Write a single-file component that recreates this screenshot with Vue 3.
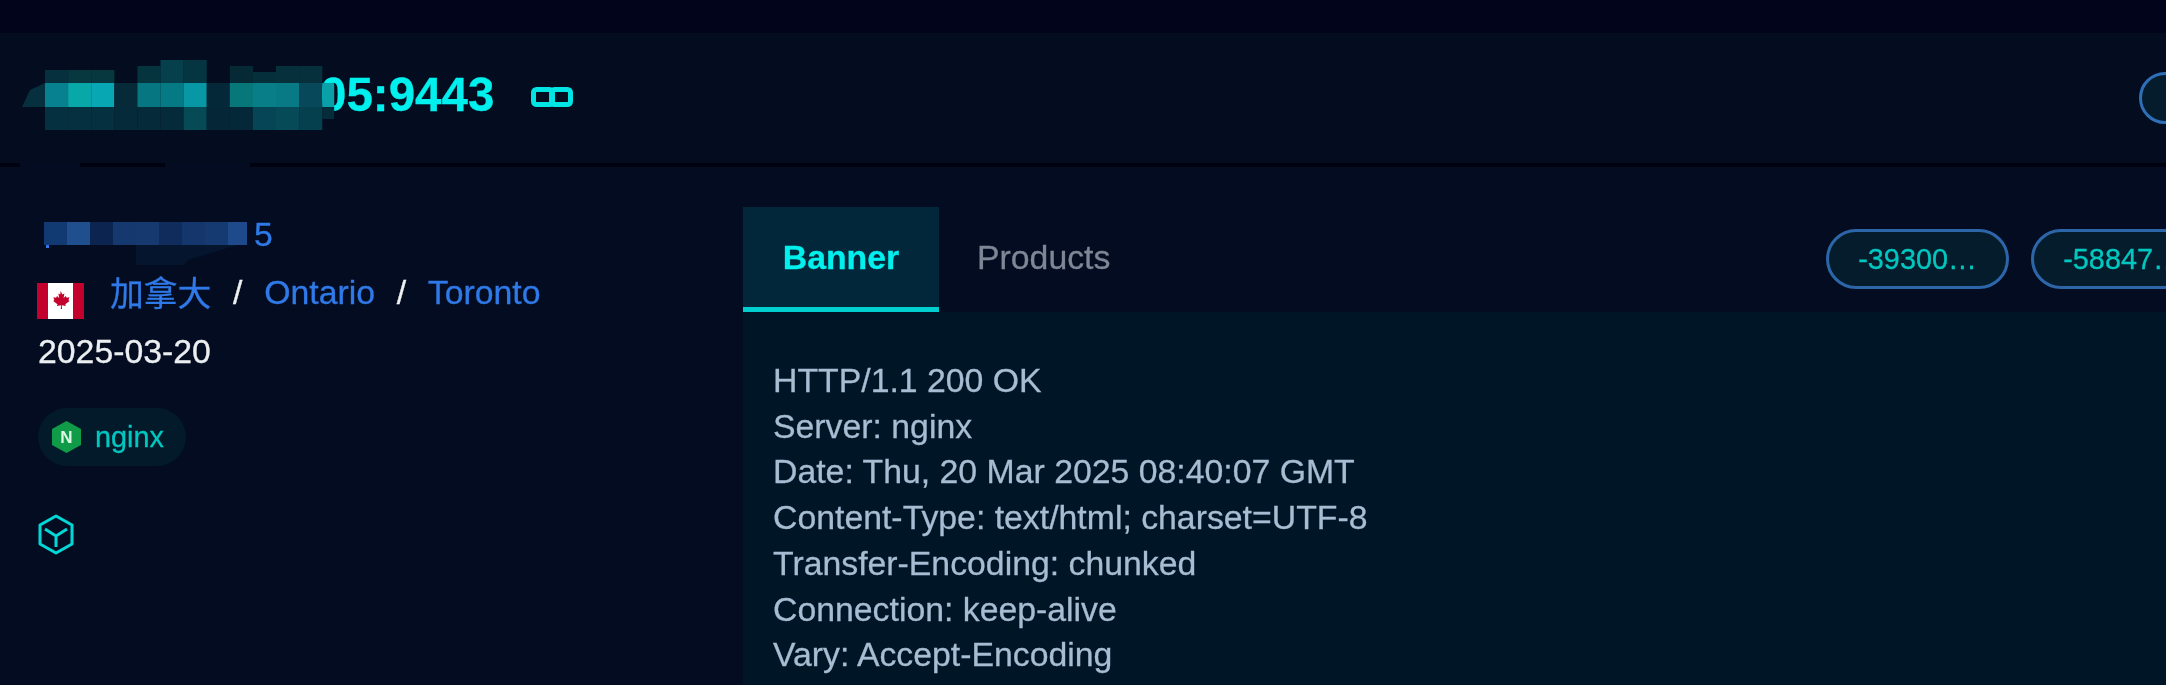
<script setup>
const headCols = [
  ['#07808f', '#05303f', 70, '#06303d'], ['#09a8a8', '#05303f', 70, '#07383f'], ['#07a8b4', '#05303f', 70, '#07383f'],
  ['#062a38', '#052b3a', 83, ''], ['#067680', '#052b3a', 66, '#05343e'], ['#057a84', '#052b3a', 60, '#05404c'],
  ['#0898a5', '#064a55', 60, '#053540'], ['#052838', '#052636', 83, ''], ['#07777a', '#052838', 66, '#052a36'],
  ['#087f88', '#064555', 72, '#052f3a'], ['#077a85', '#064a58', 66, '#05303c'], ['#07485a', '#05404e', 66, '#05303c'],
  ['#0aa0a8', '#052c3a', 83, '']
]
const headRects = headCols.flatMap((c, i) => {
  const x = 23 + i * 23.1
  const w = i === 12 ? 12 : 23.2
  const out = [
    { x, y: 83, w, h: 24, fill: c[0] },
    { x, y: 107, w, h: i === 12 ? 12 : 23, fill: c[1] }
  ]
  if (c[3]) out.push({ x, y: c[2], w, h: 83 - c[2], fill: c[3] })
  return out
})
const sideCols = ['#123a72', '#1f4f8c', '#0b2450', '#15396f', '#163a70', '#102c5c', '#14366c', '#153a72', '#1e4a8c']
const sideRects = sideCols.map((fill, i) => ({ x: 6 + i * 23, w: i === 8 ? 19 : 23.2, fill }))
const banner = [
  'HTTP/1.1 200 OK',
  'Server: nginx',
  'Date: Thu, 20 Mar 2025 08:40:07 GMT',
  'Content-Type: text/html; charset=UTF-8',
  'Transfer-Encoding: chunked',
  'Connection: keep-alive',
  'Vary: Accept-Encoding'
]
</script>

<template>
  <div class="page">
    <div class="strip"></div>
    <header class="head">
      <div class="title">
        <svg class="mosaic-head" width="320" height="100" viewBox="22 55 320 100" aria-hidden="true">
          <polygon points="22,107 30,90 45,83 45,107" fill="#06303d" />
          <rect v-for="(r, i) in headRects" :key="i" :x="r.x + 22" :y="r.y" :width="r.w" :height="r.h" :fill="r.fill" />
        </svg>
        <span>05:9443</span>
      </div>
      <svg class="link" width="42" height="20" viewBox="0 0 42 20" aria-hidden="true">
        <rect x="2.500" y="2.500" width="19" height="15" rx="3" />
        <rect x="20.500" y="2.500" width="19" height="15" rx="3" />
      </svg>
      <div class="head-pill"></div>
    </header>
    <div class="divider"></div>
    <main class="main">
      <aside class="side">
        <div class="line ip">
          <svg class="mosaic-side" width="216" height="50" viewBox="0 0 216 50" aria-hidden="true">
            <path d="M98 23 H200 L150 38 L146 43 H98 Z" fill="#05152e" />
            <rect v-for="(r, i) in sideRects" :key="i" :x="r.x" y="0" :width="r.w" height="23" :fill="r.fill" />
            <rect x="8" y="23" width="3" height="3" fill="#2f7ae8" />
          </svg>
          <span>5</span>
        </div>
        <div class="line place">
          <svg class="flag" width="47" height="36" viewBox="0 0 47 36" aria-hidden="true">
            <rect width="47" height="36" fill="#fff" />
            <rect width="11" height="36" fill="#c4002c" />
            <rect x="36" width="11" height="36" fill="#c4002c" />
            <path d="M23.500 8l2 3.400 1.900-.9-.8 4.400 2.200-1.800.9 1.600 2.700-.4-.9 2.900 1.100.7-4.300 3.400.5 1.600-4-.6.200 3.700h-1.200l.2-3.700-4 .6.500-1.600-4.300-3.400 1.100-.7-.9-2.900 2.700.4.900-1.600 2.200 1.800-.8-4.400 1.900.9z" fill="#c4002c" />
          </svg>
          <a class="cn">加拿大</a>
          <span class="sep">/</span>
          <a>Ontario</a>
          <span class="sep">/</span>
          <a>Toronto</a>
        </div>
        <div class="line date">2025-03-20</div>
        <div class="chip">
          <svg width="29" height="32" viewBox="0 0 29 32" aria-hidden="true">
            <polygon points="14.500,0 29,8 29,24 14.500,32 0,24 0,8" fill="#0f9b48" />
            <text x="14.500" y="21.500" text-anchor="middle" class="n">N</text>
          </svg>
          <span>nginx</span>
        </div>
        <svg class="cube" width="36" height="41" viewBox="0 0 36 41" aria-hidden="true">
          <path d="M18 2 L34 11 V30 L18 39 L2 30 V11 Z M7 15 L18 22 L29 15 M18 22 V33" />
        </svg>
      </aside>
      <section class="content">
        <div class="tabs">
          <button class="tab active">Banner</button>
          <button class="tab">Products</button>
          <div class="pills">
            <span class="pill">-39300…</span>
            <span class="pill">-58847…</span>
          </div>
        </div>
        <div class="panel">
          <div v-for="l in banner" :key="l">{{ l }}</div>
        </div>
      </section>
    </main>
  </div>
</template>

<style>
html, body { margin: 0; background: #030c20; }
</style>

<style scoped>
.page {
  width: 2166px;
  height: 685px;
  overflow: hidden;
  display: flex;
  flex-direction: column;
  background: #030c20;
  font-family: "Liberation Sans", "Noto Sans CJK SC", sans-serif;
  font-size: 33.800px;
  -webkit-text-stroke: 0.3px currentColor;
  filter: blur(0.6px);
}
.strip { height: 33px; flex: none; background: #01041a; }
.head {
  height: 130px;
  flex: none;
  display: flex;
  align-items: center;
  background: #040c20;
  overflow: hidden;
}
.divider {
  height: 4px;
  flex: none;
  background: linear-gradient(90deg, #00030f 0 20px, #030c20 20px 80px, #00030f 80px 165px, #030c20 165px 250px, #00030f 250px);
}
.title {
  position: relative;
  margin-left: 320px;
  font-size: 47.500px;
  font-weight: 700;
  color: #00f0ee;
  line-height: 60px;
  margin-top: -6px;
}
.mosaic-head { position: absolute; left: -298px; top: -10px; }
.link { margin-left: 37px; margin-top: -2px; fill: none; stroke: #00e4e4; stroke-width: 5; }
.head-pill {
  width: 120px;
  height: 52px;
  margin-left: auto;
  margin-right: -93px;
  flex: none;
  box-sizing: border-box;
  margin-top: -1px;
  border: 3px solid #2f6fb8;
  border-radius: 26px;
  background: #051c2c;
}
.main { flex: 1; display: flex; min-height: 0; }
.side {
  width: 743px;
  flex: none;
  box-sizing: border-box;
  padding: 39px 0 0 38px;
  display: flex;
  flex-direction: column;
  align-items: flex-start;
}
.line { line-height: 57.600px; height: 57.600px; white-space: nowrap; }
.ip { position: relative; padding-left: 216px; color: #2f7ae8; }
.mosaic-side { position: absolute; left: 0; top: 16px; }
.place { display: flex; align-items: flex-start; color: #2f7ae8; }
.flag { margin: 19px 26px 0 -1px; }
.cn { margin-top: 2px; }
.sep { color: #eef0f2; margin: 0 21.700px; }
.date { color: #eceff1; padding-top: 2px; }
.chip {
  margin-top: 27px;
  height: 58px;
  width: 148px;
  border-radius: 29px;
  background: #021a29;
  display: flex;
  align-items: center;
  gap: 14px;
  padding-left: 14px;
  box-sizing: border-box;
  color: #00c8c0;
  font-size: 28.800px;
}
.chip span { margin-top: 2px; }
.n { font-size: 17px; font-weight: 700; fill: #dff5e6; stroke: none; }
.cube { margin-top: 48px; fill: none; stroke: #00d8d8; stroke-width: 3; stroke-linejoin: round; }
.content { flex: 1; min-width: 0; display: flex; flex-direction: column; padding-top: 40px; }
.tabs { display: flex; height: 105px; flex: none; overflow: hidden; }
.tab {
  height: 105px;
  padding: 0 40px;
  border: 0;
  border-bottom: 5px solid transparent;
  background: transparent;
  color: #7e8795;
  font: inherit;
  -webkit-text-stroke: inherit;
}
.tab.active {
  background: #03273a;
  color: #00f0ee;
  font-weight: 700;
  border-bottom-color: #00cfd0;
  width: 196px;
  padding: 0;
}
.tab:nth-child(2) { padding: 0 38px; }
.pills {
  margin-left: auto;
  margin-right: -48px;
  display: flex;
  gap: 22px;
  padding-top: 22px;
  flex: none;
}
.pill {
  width: 183px;
  height: 60px;
  box-sizing: border-box;
  border: 3px solid #2c66a8;
  border-radius: 30px;
  background: #051c2c;
  color: #00c8c0;
  font-size: 28.800px;
  line-height: 54px;
  text-align: center;
  flex: none;
}
.panel {
  flex: 1;
  background: #001526;
  padding: 46px 0 0 30px;
  color: #a8bcd2;
  line-height: 45.700px;
}
</style>
